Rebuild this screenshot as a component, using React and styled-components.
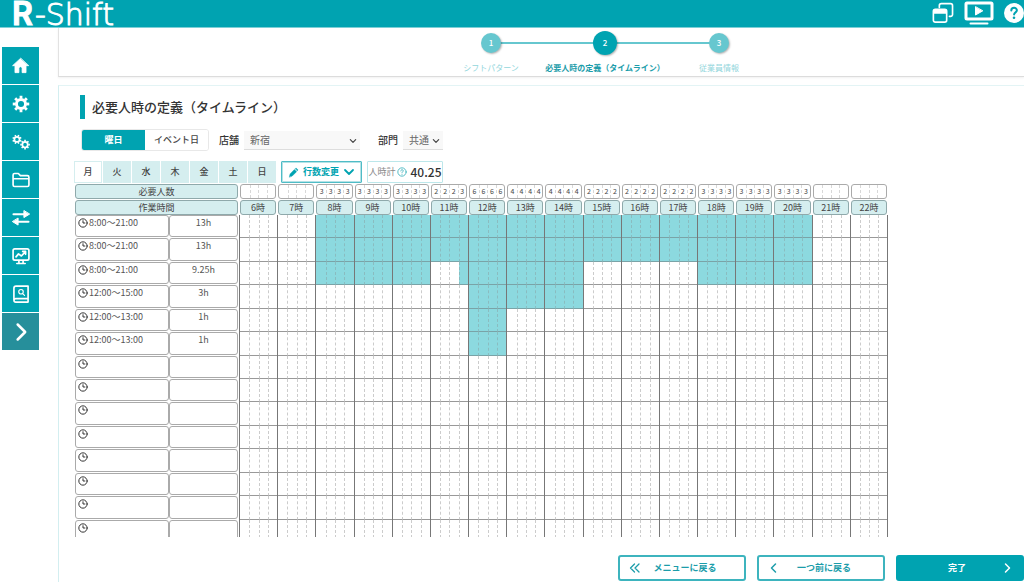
import React, { useState } from "react";
import styled, { createGlobalStyle } from "styled-components";

const teal = "#00a3b1";
const pale = "#d5eeef";
const mid = "#66c7cf";
const fill = "#8cd9df";

const GlobalStyle = createGlobalStyle`
  *, *::before, *::after { box-sizing: border-box; }
  body {
    margin: 0;
    background: #fff;
    color: #444;
    font-family: "Noto Sans CJK JP", "Noto Sans", sans-serif;
    font-size: 9px;
    line-height: 12px;
  }
  button, select { font: inherit; color: inherit; margin: 0; padding: 0; border: 0; background: none; cursor: pointer; }
`;

const Page = styled.div`
  display: flex;
  flex-direction: column;
  height: 100vh;
  overflow: hidden;
`;

const TopBar = styled.header`
  display: flex;
  flex: none;
  align-items: flex-start;
  justify-content: space-between;
  height: 28px;
  padding-left: 12px;
  background: ${teal};
  border-bottom: 1px solid #7fd0d7;
  color: #fff;
`;

const Logo = styled.a`
  display: flex;
  align-items: baseline;
  gap: 2px;
  color: #fff;
  text-decoration: none;
  font-family: "DejaVu Sans", sans-serif;
  font-size: 30px;
  font-weight: 200;
  line-height: 27px;
  -webkit-text-stroke: 1px #fff;
`;

const LogoMark = styled.span`
  font-family: Inter, sans-serif;
  font-size: 32px;
  font-weight: 600;
  line-height: 27px;
`;

const TopTools = styled.nav`
  display: flex;
  align-items: center;
  gap: 10px;
  height: 25px;
`;

const IconButton = styled.button`
  display: flex;
  color: #fff;
`;

const Body = styled.div`
  display: flex;
  flex: 1;
  min-height: 0;
  gap: 19px;
  padding-left: 2px;
`;

const SideNav = styled.nav`
  display: flex;
  flex: none;
  flex-direction: column;
  gap: 1px;
  width: 37px;
  padding-top: 19px;
`;

const SideButton = styled.button`
  display: flex;
  align-items: center;
  justify-content: center;
  height: 37px;
  color: #fff;
  background: ${(p) => (p.$toggle ? "#268f9b" : teal)};
`;

const Content = styled.main`
  display: flex;
  flex: 1;
  flex-direction: column;
  gap: 8px;
  min-width: 0;
`;

const StepPanel = styled.section`
  flex: none;
  height: 49px;
  padding-left: 127px;
  border-left: 1px solid #e2e2e2;
  border-bottom: 1px solid #dcdcdc;
  box-shadow: 0 1px 2px #0000000f;
`;

const Steps = styled.ol`
  display: grid;
  grid-template-columns: repeat(3, 114px);
  justify-content: center;
  margin: 0;
  padding: 2px 0 0;
  list-style: none;
`;

const Step = styled.li`
  position: relative;
  display: flex;
  flex-direction: column;
  align-items: center;
  gap: 6px;
  white-space: nowrap;
  font-size: 8px;
  font-weight: ${(p) => (p.$active ? 700 : 400)};
  color: ${(p) => (p.$active ? "#1c9daa" : "#93d6dc")};

  &:not(:last-child)::before {
    content: "";
    position: absolute;
    top: 12px;
    left: 50%;
    width: 100%;
    height: 2px;
    background: ${mid};
  }
`;

const StepDotBox = styled.span`
  position: relative;
  z-index: 1;
  display: flex;
  align-items: center;
  height: 26px;
`;

const StepDot = styled.span`
  display: flex;
  align-items: center;
  justify-content: center;
  width: ${(p) => (p.$active ? 24 : 20)}px;
  height: ${(p) => (p.$active ? 24 : 20)}px;
  border-radius: 50%;
  background: ${(p) => (p.$active ? teal : mid)};
  box-shadow: 1px 1px 2px #0000004d;
  color: #fff;
  font-weight: 500;
`;

const Panel = styled.section`
  display: flex;
  flex: 1;
  flex-direction: column;
  min-height: 0;
  padding: 9px 0 1px 15px;
  border-left: 1px solid #d3eef0;
  border-top: 1px solid #e3f4f5;
`;

const Title = styled.h1`
  margin: 0 0 10px 6px;
  padding-left: 7px;
  border-left: 5px solid ${teal};
  font-size: 13px;
  font-weight: 500;
  line-height: 24px;
  color: #333;
`;

const FilterRow = styled.div`
  display: flex;
  align-items: center;
  margin: 0 0 10px 6px;
  padding-left: 1px;
`;

const Segments = styled.div`
  display: flex;
  height: 22px;
  margin-right: 10px;
  border: 1px solid #e8e8e8;
  border-radius: 3px;
  overflow: hidden;
`;

const Segment = styled.button`
  width: 63px;
  font-weight: ${(p) => (p.$active ? 700 : 500)};
  color: ${(p) => (p.$active ? "#fff" : "#444")};
  background: ${(p) => (p.$active ? teal : "#fff")};
`;

const FieldLabel = styled.label`
  margin-right: 5px;
  font-size: 10px;
  font-weight: 500;
  color: #333;
`;

const SelectBox = styled.span`
  position: relative;
  display: flex;
  width: ${(p) => p.$width}px;
  margin-right: 18px;

  svg {
    position: absolute;
    right: 3px;
    top: 6px;
    pointer-events: none;
  }
`;

const Select = styled.select`
  appearance: none;
  width: 100%;
  height: 19px;
  padding-left: 6px;
  border-bottom: 1px solid #ddd;
  background: #f8f8f8;
  font-size: 10px;
  color: #666;
`;

const ToolRow = styled.div`
  display: flex;
  gap: 5px;
  height: 22px;
  margin-bottom: 1px;
`;

const Days = styled.div`
  display: grid;
  grid-template-columns: repeat(7, 1fr);
  gap: 1px;
  width: 202px;
`;

const Day = styled.button`
  font-size: 9px;
  font-weight: 500;
  background: ${(p) => (p.$active ? "#fff" : pale)};
  border: ${(p) => (p.$active ? `1px solid ${pale}` : "0")};
`;

const RowsButton = styled.button`
  display: flex;
  align-items: center;
  justify-content: center;
  gap: 4px;
  width: 81px;
  border: 1px solid #4fbcc6;
  box-shadow: inset 0 0 0 1px #b5e2e6;
  border-radius: 1px;
  color: ${teal};
  font-weight: 700;
`;

const Total = styled.div`
  display: flex;
  align-items: center;
  width: 76px;
  justify-content: center;
  gap: 1px;
  border: 1px solid #bce7ea;
  border-radius: 1px;
  font-size: 9px;
  color: #888;

  svg { color: #35b0bb; }

  strong {
    margin-left: 3px;
    font-size: 12px;
    font-weight: 500;
    color: #333;
  }
`;

const Scroller = styled.div`
  flex: 1;
  min-height: 0;
  width: 814px;
  max-width: 100%;
  overflow: hidden;
`;

const Table = styled.table`
  display: block;
  width: 814px;

  thead { display: block; }
  tbody {
    display: grid;
    grid-template-rows: repeat(14, 1fr);
    height: 328px;
  }
`;

const Tr = styled.tr`
  display: grid;
  grid-template-columns: 95px 70px repeat(17, 1fr);
  ${(p) => p.$head && `height: 15px; margin-bottom: ${p.$head}px;`}
`;

const HeadLabel = styled.th`
  grid-column: span 2;
  margin-right: 1px;
  margin-left: 1px;
  padding: 0;
  border: 1px solid #8fa9ab;
  border-radius: 3px;
  background: ${pale};
  font-size: 9px;
  font-weight: 400;
  line-height: 13px;
`;

const HourHead = styled.th`
  margin: 0 1px 0 1px;
  padding: 0;
  border: 1px solid #8fa9ab;
  border-radius: 3px;
  background: ${pale};
  font-weight: 400;
  line-height: 13px;
`;

const CountCell = styled.td`
  display: grid;
  grid-template-columns: repeat(4, 1fr);
  margin: 0 1px 0 1px;
  padding: 0;
  border: 1px solid #aaa;
  border-radius: 3px;
  text-align: center;
  font-size: 7px;
  line-height: 13px;

  span:not(:first-child) { border-left: 1px dashed #d8d8d8; }
`;

const TimeCell = styled.td`
  display: flex;
  align-items: flex-start;
  gap: 1px;
  margin: 0 0 1px 1px;
  padding: 2px 2px 0;
  border: 1px solid #aaa;
  border-radius: 3px;
  line-height: 10px;
  color: #555;

  svg { flex: none; color: #333; }
`;

const LengthCell = styled.td`
  margin: 0 1px 1px 0;
  padding: 1px 0 0;
  border: 1px solid #aaa;
  border-radius: 3px;
  text-align: center;
  line-height: 11px;
  color: #555;
`;

const HourCell = styled.td`
  display: grid;
  grid-template-columns: repeat(4, 1fr);
  padding: 0;
  border-left: 1px solid #777;

  &:last-child { border-right: 1px solid #777; }
`;

const Quarter = styled.span`
  background: ${(p) => (p.$on ? fill : "#fff")};
  border-bottom: 1px solid ${(p) => (p.$on ? "#7aa3a7" : "#999")};

  &:not(:first-child) { border-left: 1px dashed ${(p) => (p.$on ? "#8abcc0" : "#ccc")}; }
`;

const Footer = styled.footer`
  display: flex;
  flex: none;
  justify-content: flex-end;
  gap: 11px;
  padding-top: 18px;
`;

const FooterButton = styled.button`
  display: grid;
  grid-template-columns: ${(p) => (p.$primary ? "6px 1fr 12px" : "12px 1fr 6px")};
  align-items: center;
  width: 128px;
  height: 26px;
  padding: 0 9px;
  border: 2px solid #3db4be;
  border-radius: 3px;
  color: #1c9daa;
  font-weight: 700;

  ${(p) => p.$primary && `background: ${teal}; border-color: ${teal}; color: #fff;`}

  span { grid-column: 2; }
`;

function Svg({ w = 18, h = w, box = "0 0 24 24", sw = 2, children }) {
  return (
    <svg width={w} height={h} viewBox={box} fill="none" stroke="currentColor" strokeWidth={sw} strokeLinecap="round" strokeLinejoin="round" aria-hidden="true">
      {children}
    </svg>
  );
}

function Gear({ cx, cy, r, teeth = 8, turn = 0 }) {
  return (
    <g transform={`translate(${cx} ${cy})`} strokeLinecap="butt">
      <circle r={r * 0.55} strokeWidth={r * 0.36} />
      {Array.from({ length: teeth }, (_, i) => (
        <path key={i} d={`M0 ${-r * 0.66}V${-r}`} strokeWidth={r * 0.34} transform={`rotate(${turn + (i * 360) / teeth})`} />
      ))}
    </g>
  );
}

const sideItems = [
  ["ホーム", <Svg w={19}><path d="M12 3 2 12.2h3V21h5v-5.5a2 2 0 0 1 4 0V21h5v-8.8h3Z" fill="currentColor" strokeWidth="1" /></Svg>],
  ["設定", <Svg w={18}><Gear cx={12} cy={12} r={11} /></Svg>],
  ["詳細設定", <Svg w={18}><Gear cx={6.6} cy={8.5} r={6.2} turn={22} /><Gear cx={17.4} cy={15.5} r={6.4} /></Svg>],
  ["フォルダ", <Svg w={20} sw={2}><path d="M2.5 18V6A1.8 1.8 0 0 1 4.3 4.200h4.500l2.500 2.600h8.400A1.800 1.800 0 0 1 21.500 8.600V18a1.800 1.800 0 0 1-1.800 1.800H4.300A1.800 1.800 0 0 1 2.500 18ZM2.500 10.500h19" /></Svg>],
  ["入出力", <Svg w={20} sw={2.500}><path d="M3 7.500h14M21 16.500h-14" /><path d="M15.500 3.500v8l6.500-4ZM8.500 12.500v8l-6.500-4Z" fill="currentColor" strokeWidth="1.200" /></Svg>],
  ["分析", <Svg w={20} sw={2}><rect x="2.500" y="3.500" width="19" height="13.500" rx="2" /><path d="M9.500 17.500v3M14.500 17.500v3M7 21h10" /><path d="m6 13 3-3.500 3.500 2.500 4.500-5M14 6.500h3.500V10" /></Svg>],
  ["マニュアル", <Svg w={20} sw={2}><path d="M3.500 19.500V5A2.500 2.500 0 0 1 6 2.500H20.500v15H5.700a2.100 2.100 0 0 0 0 4.200H20.500v-4" /><circle cx="12" cy="9.300" r="2.700" strokeWidth="1.400" /><path d="m14 11.500 2.200 2.200" strokeWidth="1.400" /></Svg>],
  ["メニューを開く", <Svg w={20} sw={3}><path d="m8 3 9 9-9 9" /></Svg>],
];

const steps = ["シフトパターン", "必要人時の定義（タイムライン）", "従業員情報"];
const dayNames = ["月", "火", "水", "木", "金", "土", "日"];
const hours = Array.from({ length: 17 }, (_, i) => i + 6);
const quarters = [0, 0.25, 0.5, 0.75];

const shifts = [
  { time: "8:00〜21:00", length: "13h", spans: [[8, 21]] },
  { time: "8:00〜21:00", length: "13h", spans: [[8, 21]] },
  { time: "8:00〜21:00", length: "9.25h", spans: [[8, 11], [11.75, 15], [18, 21]] },
  { time: "12:00〜15:00", length: "3h", spans: [[12, 15]] },
  { time: "12:00〜13:00", length: "1h", spans: [[12, 13]] },
  { time: "12:00〜13:00", length: "1h", spans: [[12, 13]] },
  ...Array.from({ length: 8 }, () => ({ time: "", length: "", spans: [] })),
];

const isOn = (shift, t) => shift.spans.some(([from, to]) => t >= from && t < to);
const countAt = (t) => shifts.filter((s) => isOn(s, t)).length || "";

const Clock = () => (
  <Svg w={10} sw={2.4}>
    <circle cx="12" cy="12" r="10" />
    <path d="M12 6.500V12h4.500" />
  </Svg>
);

const Chevron = ({ size = 8 }) => (
  <Svg w={size} sw={3.6}><path d="m4 8 8 8 8-8" /></Svg>
);

export default function App() {
  const [day, setDay] = useState(0);
  const [mode, setMode] = useState(0);

  return (
    <Page>
      <GlobalStyle />
      <TopBar>
        <Logo href="#"><LogoMark>R</LogoMark>-Shift</Logo>
        <TopTools>
          <IconButton aria-label="ウィンドウ">
            <Svg w={22} sw={1.800}>
              <path d="M8 6V4a2.200 2.200 0 0 1 2.200-2.200h10A2.200 2.200 0 0 1 22.400 4v9.500a2.200 2.200 0 0 1-2.200 2.200H19" />
              <rect x="1.500" y="8" width="14.500" height="14" rx="2" />
              <path d="M2 9h13.500v3H2Z" fill="currentColor" />
            </Svg>
          </IconButton>
          <IconButton aria-label="動画">
            <Svg w={30} h={24} box="0 0 30 24" sw={3}>
              <rect x="2" y="2" width="26" height="16" rx="1" />
              <path d="M11.500 6v8l7-4Z" fill="currentColor" strokeWidth="1" />
              <path d="M6.500 22.500h17" strokeWidth="2" />
            </Svg>
          </IconButton>
          <IconButton aria-label="ヘルプ">
            <Svg w={20} box="0 0 20 20">
              <circle cx="10" cy="10" r="10" fill="currentColor" stroke="none" />
              <path d="M7.300 7.500c0-3.600 5.600-3.500 5.600-.2 0 2-2.800 2.100-2.800 4.200" stroke={teal} strokeWidth="2" />
              <circle cx="10" cy="14.800" r="1.300" fill={teal} stroke="none" />
            </Svg>
          </IconButton>
        </TopTools>
      </TopBar>

      <Body>
        <SideNav>
          {sideItems.map(([label, icon], i) => (
            <SideButton key={label} aria-label={label} $toggle={i === 7}>{icon}</SideButton>
          ))}
        </SideNav>

        <Content>
          <StepPanel>
            <Steps>
              {steps.map((label, i) => (
                <Step key={label} $active={i === 1}>
                  <StepDotBox><StepDot $active={i === 1}>{i + 1}</StepDot></StepDotBox>
                  {label}
                </Step>
              ))}
            </Steps>
          </StepPanel>

          <Panel>
            <Title>必要人時の定義（タイムライン）</Title>

            <FilterRow>
              <Segments>
                {["曜日", "イベント日"].map((name, i) => (
                  <Segment key={name} $active={mode === i} aria-pressed={mode === i} onClick={() => setMode(i)}>{name}</Segment>
                ))}
              </Segments>
              <FieldLabel htmlFor="store">店舗</FieldLabel>
              <SelectBox $width={116}>
                <Select id="store"><option>新宿</option></Select>
                <Chevron />
              </SelectBox>
              <FieldLabel htmlFor="dept">部門</FieldLabel>
              <SelectBox $width={40}>
                <Select id="dept"><option>共通</option></Select>
                <Chevron />
              </SelectBox>
            </FilterRow>

            <ToolRow>
              <Days>
                {dayNames.map((name, i) => (
                  <Day key={name} $active={day === i} aria-pressed={day === i} onClick={() => setDay(i)}>{name}</Day>
                ))}
              </Days>
              <RowsButton>
                <Svg w={11}>
                  <path d="M3 21.500 4.500 15 14 5.500l4.700 4.700L9.200 19.700ZM16 3.500l1.500-1.500 4.500 4.500L20.500 8Z" fill="currentColor" strokeWidth="1" />
                </Svg>
                行数変更
                <Chevron size={12} />
              </RowsButton>
              <Total>
                人時計
                <Svg w={10} sw={2}>
                  <circle cx="12" cy="12" r="10" />
                  <path d="M9 9.500c0-4 6-4 6-.5 0 2.200-3 2.500-3 4.800M12 17.500v.2" />
                </Svg>
                <strong>40.25</strong>
              </Total>
            </ToolRow>

            <Scroller>
              <Table>
                <thead>
                  <Tr $head={1}>
                    <HeadLabel scope="row">必要人数</HeadLabel>
                    {hours.map((h) => (
                      <CountCell key={h}>
                        {quarters.map((q) => <span key={q}>{countAt(h + q)}</span>)}
                      </CountCell>
                    ))}
                  </Tr>
                  <Tr $head="0">
                    <HeadLabel scope="row">作業時間</HeadLabel>
                    {hours.map((h) => <HourHead key={h} scope="col">{h}時</HourHead>)}
                  </Tr>
                </thead>
                <tbody>
                  {shifts.map((shift, i) => (
                    <Tr key={i}>
                      <TimeCell><Clock />{shift.time}</TimeCell>
                      <LengthCell>{shift.length}</LengthCell>
                      {hours.map((h) => (
                        <HourCell key={h}>
                          {quarters.map((q) => <Quarter key={q} $on={isOn(shift, h + q)} />)}
                        </HourCell>
                      ))}
                    </Tr>
                  ))}
                </tbody>
              </Table>
            </Scroller>

            <Footer>
              <FooterButton>
                <Svg w={12} sw={2.600}><path d="m11 4-8 8 8 8M20 4l-8 8 8 8" /></Svg>
                <span>メニューに戻る</span>
              </FooterButton>
              <FooterButton>
                <Svg w={12} sw={3}><path d="m15 4-8 8 8 8" /></Svg>
                <span>一つ前に戻る</span>
              </FooterButton>
              <FooterButton $primary>
                <span>完了</span>
                <Svg w={12} sw={3}><path d="m9 4 8 8-8 8" /></Svg>
              </FooterButton>
            </Footer>
          </Panel>
        </Content>
      </Body>
    </Page>
  );
}
